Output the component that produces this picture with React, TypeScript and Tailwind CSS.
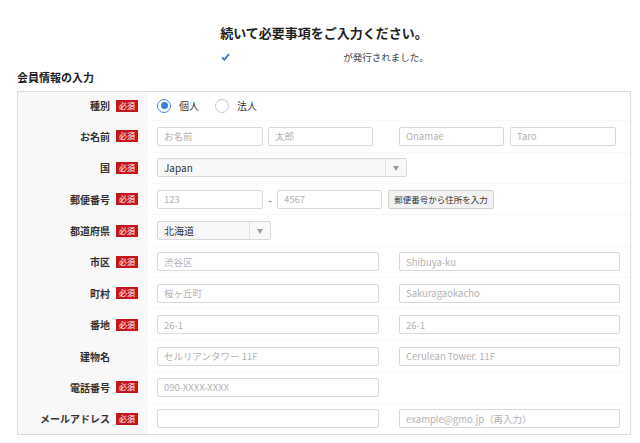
import type { ReactNode } from "react";

const font = "font-['Noto_Sans_CJK_JP','Noto_Sans',sans-serif]";

type RowProps = {
  label: string;
  required?: boolean;
  pad: string;
  last?: boolean;
  children: ReactNode;
};

const Row = ({ label, required = true, pad, last, children }: RowProps) => (
  <div className={`flex ${last ? "" : "border-b border-[#f8f8f8]"}`}>
    <div
      className={`w-[130px] shrink-0 bg-[#f8f8f8] flex items-center justify-end gap-[6px] pr-[10px] ${pad}`}
    >
      <span className="text-[10px] font-bold text-[#333] leading-[19px]">{label}</span>
      {required ? (
        <span className="w-[22px] h-[12px] bg-[#c4161c] text-white text-[8px] leading-[12px] text-center">
          必須
        </span>
      ) : (
        <span className="w-[22px]" />
      )}
    </div>
    <div className={`flex-1 flex items-center pl-[9px] ${pad}`}>{children}</div>
  </div>
);

const TextInput = ({ placeholder, w }: { placeholder?: string; w: string }) => (
  <input
    readOnly
    placeholder={placeholder}
    className={`${w} h-[19px] shrink-0 border border-[#d9d9d9] rounded-[2px] bg-white px-[6px] text-[9.5px] text-[#333] placeholder:text-[#b3b3b3] outline-none`}
  />
);

const Select = ({ value, w }: { value: string; w: string }) => (
  <div
    className={`${w} h-[19px] flex border border-[#d9d9d9] rounded-[2px] bg-[#f8f8f8] text-[10px] text-[#333]`}
  >
    <span className="flex-1 pl-[6px] leading-[17px]">{value}</span>
    <span className="w-[21px] border-l border-[#e2e2e2] flex items-center justify-center text-[6px] text-[#999]">
      ▼
    </span>
  </div>
);

const Radio = ({ checked, label }: { checked?: boolean; label: string }) => (
  <label className="flex items-center gap-[8px]">
    <span
      className={`w-[14px] h-[14px] rounded-full border flex items-center justify-center ${
        checked ? "border-[#4a86d8]" : "border-[#c8c8c8]"
      }`}
    >
      {checked && <span className="w-[7px] h-[7px] rounded-full bg-[#3f7fd6]" />}
    </span>
    <span className="text-[10px] text-[#333]">{label}</span>
  </label>
);

const first = "pt-[4px] pb-[5.2px]";
const mid = "py-[5.7px]";
const end = "pt-[5.7px] pb-[6px]";

export default function App() {
  return (
    <div className={`w-[640px] h-[443px] bg-white ${font} text-[#333]`}>
      <div className="pt-[24px] flex flex-col items-center">
        <h1 className="ml-[8px] text-[13px] leading-[18px] font-bold text-[#222]">
          続いて必要事項をご入力ください。
        </h1>
        <div className="mt-[8px] ml-[8px] flex items-center h-[14px]">
          <svg width="9" height="8" viewBox="0 0 9 8" className="ml-[2px]">
            <path d="M1 4.3 L3.4 6.6 L8 1.2" fill="none" stroke="#3a72c8" strokeWidth="1.8" />
          </svg>
          <span className="w-[113px]" />
          <span className="text-[9.5px] text-[#444]">が発行されました。</span>
        </div>
      </div>

      <h2 className="ml-[17px] mt-[6px] text-[11px] leading-[14px] font-bold text-[#222]">
        会員情報の入力
      </h2>

      <div className="ml-[17px] mt-[7px] w-[614px] border border-[#dcdcdc]">
        <Row label="種別" pad={first}>
          <div className="flex items-center gap-[16px] h-[19px]">
            <Radio checked label="個人" />
            <Radio label="法人" />
          </div>
        </Row>
        <Row label="お名前" pad={mid}>
          <div className="flex items-center h-[19px]">
            <TextInput placeholder="お名前" w="w-[106px]" />
            <div className="w-[5px]" />
            <TextInput placeholder="太郎" w="w-[105px]" />
            <div className="w-[26px]" />
            <TextInput placeholder="Onamae" w="w-[105px]" />
            <div className="w-[6px]" />
            <TextInput placeholder="Taro" w="w-[106px]" />
          </div>
        </Row>
        <Row label="国" pad={mid}>
          <Select value="Japan" w="w-[250px]" />
        </Row>
        <Row label="郵便番号" pad={mid}>
          <div className="flex items-center h-[19px]">
            <TextInput placeholder="123" w="w-[106px]" />
            <span className="w-[14px] text-center text-[10px] text-[#555]">-</span>
            <TextInput placeholder="4567" w="w-[105px]" />
            <button className="ml-[6px] h-[19px] w-[106px] border border-[#d0d0d0] rounded-[2px] bg-[#f2f2f2] text-[8.5px] text-[#333]">
              郵便番号から住所を入力
            </button>
          </div>
        </Row>
        <Row label="都道府県" pad={mid}>
          <Select value="北海道" w="w-[114px]" />
        </Row>
        <Row label="市区" pad={mid}>
          <div className="flex gap-[20px]">
            <TextInput placeholder="渋谷区" w="w-[222px]" />
            <TextInput placeholder="Shibuya-ku" w="w-[221px]" />
          </div>
        </Row>
        <Row label="町村" pad={mid}>
          <div className="flex gap-[20px]">
            <TextInput placeholder="桜ヶ丘町" w="w-[222px]" />
            <TextInput placeholder="Sakuragaokacho" w="w-[221px]" />
          </div>
        </Row>
        <Row label="番地" pad={mid}>
          <div className="flex gap-[20px]">
            <TextInput placeholder="26-1" w="w-[222px]" />
            <TextInput placeholder="26-1" w="w-[221px]" />
          </div>
        </Row>
        <Row label="建物名" required={false} pad={mid}>
          <div className="flex gap-[20px]">
            <TextInput placeholder="セルリアンタワー 11F" w="w-[222px]" />
            <TextInput placeholder="Cerulean Tower. 11F" w="w-[221px]" />
          </div>
        </Row>
        <Row label="電話番号" pad={mid}>
          <TextInput placeholder="090-XXXX-XXXX" w="w-[222px]" />
        </Row>
        <Row label="メールアドレス" pad={end} last>
          <div className="flex gap-[20px]">
            <TextInput w="w-[222px]" />
            <TextInput placeholder="example@gmo.jp（再入力）" w="w-[221px]" />
          </div>
        </Row>
      </div>
    </div>
  );
}
